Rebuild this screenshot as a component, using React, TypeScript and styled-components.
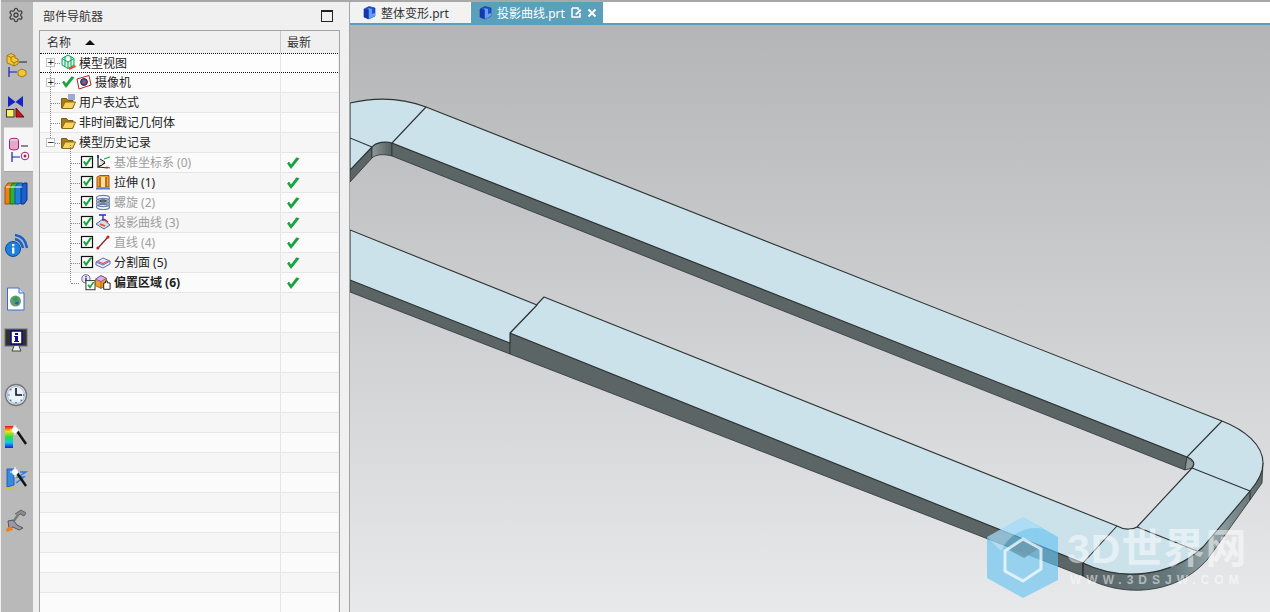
import React from 'react';
import styled, { createGlobalStyle } from 'styled-components';
import { Settings } from 'lucide-react';

const GlobalStyle = createGlobalStyle`
  html, body { margin: 0; padding: 0; height: 100%; overflow: hidden; }
  #root { height: 612px; }
`;

const Page = styled.div`
  display: flex;
  width: 1270px;
  height: 612px;
  overflow: hidden;
  background: #f0f0f0;
  font-family: "Noto Sans", "Noto Sans CJK SC", sans-serif;
  font-size: 12px;
  color: #222;
`;

const Rail = styled.div`
  width: 32px;
  flex: none;
  margin-left: 1px;
  background: #b9b9b9;
  border-top: 2px solid #a8a8a8;
  box-sizing: border-box;
  display: flex;
  flex-direction: column;
`;

const RailItem = styled.div<{ $h: number; $active?: boolean }>`
  height: ${p => p.$h}px;
  flex: none;
  display: flex;
  align-items: center;
  justify-content: center;
  padding-right: 2px;
  box-sizing: border-box;
  ${p => p.$active && `
    margin-left: 3px;
    padding-right: 0;
    background: #f6f6f6;
    border-top: 1px solid #d8d8d8;
    border-bottom: 1px solid #a8a8a8;
  `}
`;

const Navigator = styled.div`
  width: 317px;
  flex: none;
  display: flex;
  flex-direction: column;
  box-sizing: border-box;
  padding: 0 9px 0 6px;
  border-top: 2px solid #a8a8a8;
  border-right: 1px solid #a4a4a4;
`;

const NavTitle = styled.div`
  height: 28px;
  flex: none;
  display: flex;
  align-items: center;
  justify-content: space-between;
  padding: 0 7px 0 4px;
  color: #333;
`;

const MaxButton = styled.span`
  width: 10px;
  height: 9px;
  border: 1px solid #222;
  border-top-width: 2px;
`;

const TreeBox = styled.div`
  flex: 1;
  width: 301px;
  box-sizing: border-box;
  border: 1px solid #a5a5a5;
  border-bottom: none;
  overflow: hidden;
`;

const HeaderRow = styled.div`
  display: flex;
  height: 22px;
  background: #f0f0f0;
  color: #333;
`;

const HeaderName = styled.div`
  width: 241px;
  box-sizing: border-box;
  display: flex;
  align-items: center;
  gap: 14px;
  padding-left: 7px;
  border-right: 1px solid #c9c9c9;
`;

const SortArrow = styled.span`
  width: 0;
  height: 0;
  border-left: 5px solid transparent;
  border-right: 5px solid transparent;
  border-bottom: 5px solid #111;
`;

const HeaderNew = styled.div`
  flex: 1;
  display: flex;
  align-items: center;
  padding-left: 6px;
`;

const Row = styled.div<{ $odd: boolean; $selected?: boolean }>`
  display: flex;
  height: 20px;
  box-sizing: border-box;
  width: 298px;
  border-bottom: 1px solid #e6e6e6;
  background: ${p => (p.$odd ? '#f6f6f6' : '#fbfbfb')};
  ${p => p.$selected && `
    background: #fdfdfd;
    border-top: 1px dotted #111;
    border-bottom: 1px dotted #111;
  `}
`;

const NameCell = styled.div`
  position: relative;
  width: 241px;
  box-sizing: border-box;
  display: flex;
  align-items: center;
  border-right: 1px solid #e6e6e6;
`;

const NewCell = styled.div`
  flex: 1;
  display: flex;
  align-items: center;
  padding-left: 5px;
`;

const Gutter = styled.div<{ $w: number }>`
  width: ${p => p.$w}px;
  height: 100%;
  flex: none;
  position: relative;
  display: flex;
  align-items: center;
`;

/* dotted tree lines sit over the row background */
const VLine = styled.span<{ $x: number; $from: number; $to: number }>`
  position: absolute;
  left: ${p => p.$x}px;
  top: ${p => p.$from}px;
  bottom: ${p => p.$to}px;
  border-left: 1px dotted #888;
`;

const HLine = styled.span<{ $x: number; $w: number }>`
  position: absolute;
  left: ${p => p.$x}px;
  top: 50%;
  width: ${p => p.$w}px;
  border-top: 1px dotted #888;
`;

const Expander = styled.span`
  position: absolute;
  left: 6px;
  top: calc(50% - 5px);
  width: 7px;
  height: 7px;
  border: 1px solid #c4c4c4;
  background: #fff;
  color: #000;
  font: 9px/7px "DejaVu Sans", sans-serif;
  text-align: center;
  z-index: 1;
`;

const IconSlot = styled.span<{ $w: number }>`
  width: ${p => p.$w}px;
  height: 16px;
  flex: none;
  display: flex;
  align-items: center;
  justify-content: center;
  margin-top: -2px;
`;

const Label = styled.span<{ $dim?: boolean; $bold?: boolean }>`
  margin-left: 3px;
  line-height: 15px;
  white-space: nowrap;
  color: ${p => (p.$dim ? '#9e9e9e' : '#222')};
  font-weight: ${p => (p.$bold ? 700 : 400)};
`;

const Main = styled.div`
  flex: 1;
  display: flex;
  flex-direction: column;
  min-width: 0;
`;

const TabBar = styled.div`
  height: 25px;
  flex: none;
  box-sizing: border-box;
  display: flex;
  background: #fff;
  border-top: 2px solid #a8a8a8;
  border-bottom: 2px solid #5aa0bb;
`;

const Tab = styled.div<{ $active?: boolean; $w: number }>`
  width: ${p => p.$w}px;
  box-sizing: border-box;
  display: flex;
  align-items: center;
  gap: 4px;
  padding-left: ${p => (p.$active ? 7 : 12)}px;
  margin-left: ${p => (p.$active ? 1 : 0)}px;
  background: ${p => (p.$active ? '#5aa0bb' : '#f2f2f2')};
  color: ${p => (p.$active ? '#fff' : '#333')};
`;

const TabTools = styled.span`
  display: flex;
  align-items: center;
  gap: 5px;
  margin-left: 2px;
`;

const Viewport = styled.div`
  position: relative;
  flex: 1;
  min-height: 0;
  background: linear-gradient(#b4b5b7, #e8e9eb);
`;

const Scene = styled.svg`
  display: block;
  width: 100%;
  height: 100%;
`;

const Watermark = styled.div`
  position: absolute;
  left: 637px;
  top: 492px;
  display: flex;
  gap: 8px;
  pointer-events: none;
`;

const WatermarkText = styled.div`
  display: flex;
  flex-direction: column;
  color: rgba(255, 255, 255, 0.5);
  padding-top: 9px;
`;

const WatermarkTitle = styled.div`
  font: 700 41px/46px "Liberation Sans", "Noto Sans CJK SC", sans-serif;
  letter-spacing: 1px;
  white-space: nowrap;
`;

const WatermarkUrl = styled.div`
  font: 700 12px/14px "Liberation Sans", sans-serif;
  letter-spacing: 5px;
  margin: 1px 0 0 3px;
  white-space: nowrap;
`;

const Svg = ({ s = 16, w, h, children }: { s?: number; w?: number; h?: number; children: React.ReactNode }) => (
  <svg width={w ?? s} height={h ?? s} viewBox={`0 0 ${w ?? s} ${h ?? s}`}>{children}</svg>
);

const GreenCheck = () => (
  <Svg s={14}>
    <path d="M1.5 7.5 L5 12.5 L13 2.5 L10.5 1.8 L5 9 L3 6 Z" fill="#12a83a" stroke="#0c8a2e" strokeWidth="0.6" />
  </Svg>
);

const CheckBox = () => (
  <svg width="14" height="14" viewBox="0 0 14 14">
    <rect x="1.5" y="1.5" width="11" height="11" fill="#fff" stroke="#111" strokeWidth="1.2" />
    <path d="M3 7 L6 11.5 L12.5 2.5 L10 2.5 L6 8 L4.5 5.8 Z" fill="#12a83a" />
  </svg>
);

const Folder = () => (
  <Svg>
    <path d="M1.5 4.5 h5 l1.5 2 h5 v7.5 h-11.5 z" fill="#a87a1c" stroke="#7a5a14" />
    <path d="M2 14.5 L5 8 h10.5 L12.5 14.5 z" fill="#fbd35c" stroke="#8a6a1c" />
  </Svg>
);

const FormulaFolder = () => (
  <Svg>
    <path d="M1.5 4.5 h5 l1.5 2 h5 v7.5 h-11.5 z" fill="#a87a1c" stroke="#7a5a14" />
    <path d="M2 14.5 L5 8 h10.5 L12.5 14.5 z" fill="#fbd35c" stroke="#8a6a1c" />
    <path d="M8 1 h7 M8 3 h7 M8 5 h7" stroke="#2030b0" strokeWidth="0.8" />
  </Svg>
);

const CubeGreen = () => (
  <Svg>
    <path d="M8 1 L14 4.5 V11 L8 14.5 L2 11 V4.5 Z M2 4.5 L8 8 L14 4.5 M8 8 V14.5 M5 2.8 V12.8 M11 2.8 V12.8" fill="#d8f4e4" stroke="#12a060" strokeWidth="1" />
    <path d="M9 15 L15.5 12" stroke="#e8502a" strokeWidth="2" />
  </Svg>
);

const Camera = () => (
  <Svg>
    <path d="M1 5 L13 1.5 L15 11 L3 15 Z" fill="#fff" stroke="#c02020" />
    <circle cx="8" cy="8" r="3.4" fill="#5a5aa8" stroke="#222" />
    <circle cx="8" cy="8" r="1.2" fill="#e04040" />
  </Svg>
);

const DatumIcon = () => (
  <Svg>
    <path d="M3 1 V13 L10 9 M3 13 L13 14" stroke="#222" strokeWidth="1.2" fill="none" />
    <path d="M5 5 L10 8 L6 12" stroke="#222" fill="#d8d8c8" />
    <path d="M9 5 L15 3" stroke="#12a83a" strokeWidth="1.2" />
    <path d="M3 1 L3 4" stroke="#2030c0" strokeWidth="1.6" />
    <path d="M11 13 L15 14" stroke="#d02020" strokeWidth="1.2" />
  </Svg>
);

const ExtrudeIcon = () => (
  <Svg>
    <path d="M2 3 L5 1.5 H14 V13 H2 Z" fill="#f0a030" stroke="#b05010" />
    <path d="M5 3 v10 M11 3 v10" stroke="#904010" />
    <path d="M6 3 h4 v10 h-4 z" fill="#fbe0a0" />
    <path d="M1 14.5 h14" stroke="#5a80c8" strokeWidth="2" />
  </Svg>
);

const HelixIcon = () => (
  <Svg>
    {[4, 7, 10, 13].map(y => (
      <ellipse key={y} cx="8" cy={y} rx="6.5" ry="2.6" fill="none" stroke="#6a84a8" strokeWidth="1.3" />
    ))}
    <ellipse cx="8" cy="7" rx="3" ry="1.2" fill="none" stroke="#444" />
  </Svg>
);

const ProjectIcon = () => (
  <Svg>
    <path d="M1 10 L8 5 L15 11 L9 15 Z" fill="#d8dce8" stroke="#5068a0" />
    <path d="M5 10 L10 12" stroke="#e05020" strokeWidth="1.6" />
    <path d="M4 1 h7 M8 1 V7" stroke="#2030c0" strokeWidth="1.3" />
    <path d="M9 5 L13 8" stroke="#d02020" strokeWidth="1.3" />
  </Svg>
);

const LineIcon = () => (
  <Svg>
    <path d="M3 14 L13 3" stroke="#7a2020" strokeWidth="1.2" />
    <circle cx="2.8" cy="14" r="1.5" fill="#e01818" />
    <circle cx="13" cy="3" r="1.5" fill="#e01818" />
  </Svg>
);

const SplitIcon = () => (
  <Svg>
    <path d="M1 8 L8 4 L15 7 V10 L8 14 L1 11 Z" fill="#e8e8f4" stroke="#6070b8" />
    <path d="M1 8 L8 11 L15 7" fill="none" stroke="#6070b8" />
    <path d="M3 7.5 L8 9.5 L13 7" stroke="#e05050" strokeWidth="1.2" fill="none" />
  </Svg>
);

const OffsetIcon = () => (
  <svg width="34" height="18" viewBox="0 0 34 18">
    <circle cx="6.5" cy="5.5" r="4.5" fill="#e8e8f4" stroke="#606078" />
    <rect x="5.8" y="2.5" width="1.5" height="1.3" fill="#1830a0" />
    <rect x="5.8" y="4.5" width="1.5" height="4" fill="#1830a0" />
    <rect x="6.5" y="7.5" width="10" height="10" fill="#fff" stroke="#222" />
    <path d="M8 12.5 L11 16.5 L16 9 L14 9 L11 13 L9.5 11.5 Z" fill="#12a83a" />
    <path d="M17 6 L23 2 L29 5 V12 L23 16 L17 13 Z" fill="#f0a030" stroke="#a06010" />
    <path d="M17 6 L23 2 L29 5 L23 8.5 Z" fill="#d8b0e8" stroke="#8050a0" />
    <path d="M23 8.5 V16" stroke="#a06010" />
    <path d="M26 10 h2 v-2 h2 v2 h3 v7 h-7 z" fill="#fff" stroke="#111" />
  </svg>
);

const PartCube = () => (
  <Svg s={15}>
    <path d="M2 4 L7 1.5 L13 3 V11 L7 14 L2 12 Z" fill="#1c50d8" stroke="#10308a" strokeWidth="0.6" />
    <path d="M6 3 L10 4 V9 L13 8 V11 L7 14 V5 Z" fill="#6a9cf0" />
    <path d="M2 4 L6 5 V14 L2 12 Z" fill="#1438a8" />
  </Svg>
);

const Assembly = () => (
  <Svg w={24} h={26}>
    <path d="M3 8 V2.5 L7 0.5 L11 2.5 V5 L14 6 V11 L10 13 L7 11.5 L3 10 Z" fill="#f4c832" stroke="#a07a14" />
    <path d="M3 2.5 L7 4.5 L11 2.5 M7 4.5 V8 M7 8 L10 10 L14 8 M10 10 V13" fill="none" stroke="#a07a14" />
    <path d="M5 14 V24 M5 19 H13" stroke="#1220b8" strokeWidth="1.2" fill="none" />
    <path d="M15 9 H23" stroke="#222" strokeWidth="1" />
    <path d="M14 18 L18 16 L22 18 V22 L18 24 L14 22 Z" fill="#f4c832" stroke="#a07a14" />
  </Svg>
);

const Constraints = () => (
  <Svg w={22} h={24}>
    <path d="M3 1 L10.5 7 L3 12 Z M18 1 L10.5 7 L18 12 Z" fill="#1424c8" />
    <rect x="1.5" y="14.5" width="7.5" height="7.5" fill="#fff060" stroke="#333" />
    <path d="M11 13 L19 22 H11 Z" fill="#c81414" stroke="#601010" />
  </Svg>
);

const PartNav = () => (
  <Svg w={24} h={26}>
    <ellipse cx="7" cy="3.5" rx="4.5" ry="2.2" fill="#f0d0e4" stroke="#a02070" />
    <path d="M2.5 3.5 V11 C2.5 13.5 11.5 13.5 11.5 11 V3.5" fill="#e8a8cc" stroke="#a02070" />
    <path d="M5 15 V25 M5 20 H13" stroke="#1220b8" strokeWidth="1.2" fill="none" />
    <path d="M14 9 H21" stroke="#222" />
    <circle cx="18" cy="19" r="3.8" fill="#fff" stroke="#a02070" />
    <circle cx="18" cy="19" r="1.5" fill="#a02070" />
  </Svg>
);

const Books = () => (
  <Svg w={24} h={24}>
    <path d="M1 6 L4 2 H9 V21 L5 23 H1 Z" fill="#f08010" stroke="#a05008" />
    <path d="M6 6 L9 2 H14 V21 L10 23 H6 Z" fill="#30b030" stroke="#107010" />
    <path d="M11 6 L14 2 H19 V21 L15 23 H11 Z" fill="#2080e0" stroke="#1050a0" />
    <path d="M17 6 L20 2 H23 V19 L20 23 H17 Z" fill="#1860d0" stroke="#103080" />
    <path d="M2 6 H7 M7 6 H12 M12 6 H18" stroke="#fff" strokeWidth="1" />
  </Svg>
);

const InfoFeed = () => (
  <Svg w={26} h={26}>
    <path d="M12 2 C19 3 23 8 24 15" fill="none" stroke="#1c60c8" strokeWidth="2.4" />
    <path d="M12 6 C16 7 19 10 20 15" fill="none" stroke="#1c60c8" strokeWidth="2.4" />
    <circle cx="10" cy="16" r="7.5" fill="#1c80e0" stroke="#104ea0" />
    <rect x="9" y="11" width="2.4" height="2.2" fill="#fff" />
    <rect x="9" y="14.5" width="2.4" height="6" fill="#fff" />
  </Svg>
);

const DocGlobe = () => (
  <Svg w={20} h={24}>
    <path d="M1.5 1 H13 L18 6 V23 H1.5 Z" fill="#fff" stroke="#3870c8" />
    <path d="M13 1 V6 H18" fill="#d8e8f8" stroke="#3870c8" />
    <circle cx="9.5" cy="14" r="5.5" fill="#6a9a78" />
    <path d="M6 12 L10 9 L13 13 L9 15 Z" fill="#30a050" />
    <path d="M8 16 L13 14 L12 18 Z" fill="#2060b0" />
  </Svg>
);

const MonitorInfo = () => (
  <Svg w={24} h={26}>
    <rect x="1" y="1" width="22" height="17" fill="#303030" stroke="#707070" />
    <rect x="7" y="3" width="11" height="13" fill="#fff" stroke="#101080" strokeWidth="1.6" />
    <rect x="11" y="5" width="3" height="2" fill="#101080" />
    <path d="M10 8 H14 V13 H15 V14 H10 V13 H11 V9 H10 Z" fill="#101080" />
    <path d="M10 18 L8 23 H17 L15 18" fill="#eee" stroke="#444" />
  </Svg>
);

const ClockIcon = () => (
  <Svg w={24} h={24}>
    <circle cx="12" cy="12" r="10.5" fill="#dfe8f4" stroke="#777" strokeWidth="1.4" />
    <circle cx="12" cy="12" r="8.5" fill="#eaf2fb" stroke="#a8b8cc" />
    <path d="M12 5 V12 H18" stroke="#111" strokeWidth="1.6" fill="none" />
    {[[12, 19.5], [5, 12], [19.5, 12], [6.8, 6.8], [17.2, 17.2], [6.8, 17.2]].map(([x, y]) => (
      <circle key={`${x}-${y}`} cx={x} cy={y} r="0.7" fill="#2a4a80" />
    ))}
  </Svg>
);

const Wand = () => (
  <>
    <path d="M13 6 L22 19" stroke="#111" strokeWidth="2.4" />
    <circle cx="11" cy="5" r="3" fill="#fff" />
    <path d="M11 0 V10 M6 5 H16" stroke="#fff" strokeWidth="1" />
  </>
);

const PaletteWand = () => (
  <Svg w={24} h={24}>
    <defs>
      <linearGradient id="rainbow" x1="0" y1="0" x2="0" y2="1">
        <stop offset="0" stopColor="#e81010" />
        <stop offset="0.25" stopColor="#f0e010" />
        <stop offset="0.5" stopColor="#20e040" />
        <stop offset="0.75" stopColor="#10c8e8" />
        <stop offset="1" stopColor="#1020e0" />
      </linearGradient>
    </defs>
    <rect x="1" y="1" width="8" height="22" fill="url(#rainbow)" />
    <Wand />
  </Svg>
);

const SheetWand = () => (
  <Svg w={24} h={24}>
    <path d="M3 2 H10 V18 L3 20 Z" fill="#3a8ae0" stroke="#1c60c0" />
    <path d="M10 5 H22 L14 10 H20 L12 16" fill="none" stroke="#2a78d8" strokeWidth="1.4" />
    <path d="M1 21 H10" stroke="#e0c020" strokeWidth="1.6" />
    <Wand />
  </Svg>
);

const ToolsIcon = () => (
  <Svg w={24} h={24}>
    <path d="M11 5 L17 1 L22 4 L20 7 L16 5 L14 7" fill="#8a8a8a" stroke="#666" />
    <path d="M14 6 L9 13" stroke="#777" strokeWidth="2.2" />
    <path d="M4 12 L9 11 L13 16 L19 19 L15 21 L9 18 L5 19 Z" fill="#9898b0" stroke="#555" />
    <path d="M2 20 L7 17 L9 21 L3 23 Z" fill="#f08018" />
  </Svg>
);

const EditDoc = () => (
  <Svg s={11}>
    <path d="M1 1 H7 V3 M9 6 V10 H1 V1" fill="none" stroke="#fff" strokeWidth="1.5" />
    <path d="M4 7 L9 2 L10.5 3.5 L5.5 8 Z" fill="#fff" />
  </Svg>
);

const CloseX = () => (
  <Svg s={10}>
    <path d="M1.5 1.5 L8.5 8.5 M8.5 1.5 L1.5 8.5" stroke="#fff" strokeWidth="2" />
  </Svg>
);

const railItems: { h: number; active?: boolean; icon: React.ReactNode }[] = [
  { h: 26, icon: <Settings size={16} color="#444" strokeWidth={2} /> },
  { h: 17, icon: null },
  { h: 42, icon: <Assembly /> },
  { h: 40, icon: <Constraints /> },
  { h: 45, active: true, icon: <PartNav /> },
  { h: 42, icon: <Books /> },
  { h: 64, icon: <InfoFeed /> },
  { h: 42, icon: <DocGlobe /> },
  { h: 42, icon: <MonitorInfo /> },
  { h: 12, icon: null },
  { h: 42, icon: <ClockIcon /> },
  { h: 42, icon: <PaletteWand /> },
  { h: 42, icon: <SheetWand /> },
  { h: 42, icon: <ToolsIcon /> },
];

type TreeRow = {
  label?: string;
  depth?: number;
  expander?: string;
  check?: boolean;
  icon?: React.ReactNode;
  dim?: boolean;
  bold?: boolean;
  latest?: boolean;
  selected?: boolean;
};

const rows: TreeRow[] = [
  { label: '模型视图', expander: '+', icon: <CubeGreen />, selected: true },
  { label: '摄像机', expander: '+', check: true, icon: <Camera /> },
  { label: '用户表达式', icon: <FormulaFolder /> },
  { label: '非时间戳记几何体', icon: <Folder /> },
  { label: '模型历史记录', expander: '−', icon: <Folder /> },
  { label: '基准坐标系 (0)', depth: 1, icon: <DatumIcon />, dim: true, latest: true },
  { label: '拉伸 (1)', depth: 1, icon: <ExtrudeIcon />, latest: true },
  { label: '螺旋 (2)', depth: 1, icon: <HelixIcon />, dim: true, latest: true },
  { label: '投影曲线 (3)', depth: 1, icon: <ProjectIcon />, dim: true, latest: true },
  { label: '直线 (4)', depth: 1, icon: <LineIcon />, dim: true, latest: true },
  { label: '分割面 (5)', depth: 1, icon: <SplitIcon />, latest: true },
  { label: '偏置区域 (6)', depth: 2, bold: true, latest: true },
];

const totalRows = 28;

function TreeLines({ index, row }: { index: number; row: TreeRow }) {
  const outer = index <= 4;
  const inner = index >= 4 && index <= 11;
  return (
    <>
      {outer && <VLine $x={10} $from={index === 0 ? 9 : 0} $to={index === 4 ? 10 : 0} />}
      {outer && <HLine $x={11} $w={9} />}
      {inner && <VLine $x={30} $from={index === 4 ? 12 : 0} $to={index === 11 ? 10 : 0} />}
      {row.depth && <HLine $x={31} $w={row.depth === 2 ? 8 : 9} />}
    </>
  );
}

const Scene3D = () => (
  <Scene viewBox="350 25 920 587">
    <defs>
      <linearGradient id="wallEnd" x1="1083" y1="0" x2="1262" y2="0" gradientUnits="userSpaceOnUse">
        <stop offset="0" stopColor="#5a6466" />
        <stop offset="0.5" stopColor="#66787c" />
        <stop offset="0.72" stopColor="#93a6aa" />
        <stop offset="1" stopColor="#5c686a" />
      </linearGradient>
      <linearGradient id="wallCorner" x1="372" y1="0" x2="392" y2="0" gradientUnits="userSpaceOnUse">
        <stop offset="0" stopColor="#8d999b" />
        <stop offset="1" stopColor="#545d5e" />
      </linearGradient>
    </defs>
    {/* walls */}
    <path d="M350 170 L372 147 L372 158 L350 182 Z" fill="#5c6566" stroke="#2e3234" strokeWidth="0.8" />
    <path d="M372 147 C376 142 386 141 392 143 L392 156 C384 154 376 154 372 158 Z" fill="url(#wallCorner)" stroke="#2e3234" strokeWidth="0.8" />
    <path d="M392 143 L1187 457 L1185 470 L392 156 Z" fill="#5c6566" stroke="#2e3234" strokeWidth="0.8" />
    <path d="M1187 457 L1194 463 L1192 468 L1185 470 Z" fill="#8d999b" stroke="#2e3234" strokeWidth="0.8" />
    <path d="M350 280 L510 343 L510 354 L350 292 Z" fill="#5c6566" stroke="#2e3234" strokeWidth="0.8" />
    <path d="M510 333 L1083 563 L1083 576 L970 532 L510 354 Z" fill="#5c6566" stroke="#2e3234" strokeWidth="0.8" />
    <path d="M1083 563 C1120 581 1170 578 1203 547 L1250 491 L1263 463 L1262 483 L1250 500 L1207 560 C1175 596 1120 598 1083 576 Z" fill="url(#wallEnd)" stroke="#2e3234" strokeWidth="0.8" />
    {/* top faces */}
    <g fill="#cbe2ea" stroke="#2e3234" strokeWidth="1.1" strokeLinejoin="round">
      <path d="M350 103 C376 97 402 98 426 107 L1222 421 C1245 430 1263 445 1263 463 C1263 473 1257 483 1250 491 L1203 547 C1170 578 1120 581 1083 563 L510 333 L544 297 L1117 526 C1124 530 1132 530 1137 527 L1192 468 C1196 464 1193 459 1187 457 L392 143 C386 141 376 142 372 147 L350 170 Z" />
      <path d="M350 230 L537 305 L510 333 L510 343 L350 280 Z" />
      <path d="M350 138 L372 147 M392 143 L426 107 M1187 457 L1222 421 M1192 468 L1250 491 M1137 527 L1197 551 M1117 526 L1083 563 M1250 491 V500 M1083 563 V576" fill="none" />
    </g>
  </Scene>
);

export default function App() {
  return (
    <Page>
      <GlobalStyle />
      <Rail>
        {railItems.map((item, i) => (
          <RailItem key={i} $h={item.h} $active={item.active}>{item.icon}</RailItem>
        ))}
      </Rail>
      <Navigator>
        <NavTitle>
          <span>部件导航器</span>
          <MaxButton />
        </NavTitle>
        <TreeBox>
          <HeaderRow>
            <HeaderName>名称<SortArrow /></HeaderName>
            <HeaderNew>最新</HeaderNew>
          </HeaderRow>
          {Array.from({ length: totalRows }, (_, i) => {
            const row: TreeRow = rows[i] ?? {};
            return (
              <Row key={i} $odd={i % 2 === 0} $selected={row.selected}>
                <NameCell>
                  {row.label && (
                    <Gutter $w={row.depth ? 40 : 20}>
                      <TreeLines index={i} row={row} />
                      {row.expander && <Expander>{row.expander}</Expander>}
                    </Gutter>
                  )}
                  {row.depth === 1 && <IconSlot $w={14}><CheckBox /></IconSlot>}
                  {row.check && <IconSlot $w={16}><GreenCheck /></IconSlot>}
                  {row.icon && <IconSlot $w={row.depth ? 17 : 16}>{row.icon}</IconSlot>}
                  {row.depth === 2 && <IconSlot $w={31}><OffsetIcon /></IconSlot>}
                  {row.label && <Label $dim={row.dim} $bold={row.bold}>{row.label}</Label>}
                </NameCell>
                <NewCell>{row.latest && <GreenCheck />}</NewCell>
              </Row>
            );
          })}
        </TreeBox>
      </Navigator>
      <Main>
        <TabBar>
          <Tab $w={120}><PartCube /><span>整体变形.prt</span></Tab>
          <Tab $w={132} $active>
            <PartCube />
            <span>投影曲线.prt</span>
            <TabTools><EditDoc /><CloseX /></TabTools>
          </Tab>
        </TabBar>
        <Viewport>
          <Scene3D />
          <Watermark>
            <svg width="72" height="82" viewBox="0 0 72 82">
              <path d="M36 0 L71 20 V63 L36 81 L0 61 V20 Z" fill="#62c2f2" fillOpacity="0.62" />
              <path d="M36 0 L56 12 C42 8 22 16 14 34 L0 20 Z" fill="#fff" fillOpacity="0.3" />
              <path d="M18 34 L36 22 L54 32 V52 L36 64 L18 54 Z" fill="#9ad4ee" fillOpacity="0.35" stroke="#fff" strokeOpacity="0.7" strokeWidth="3" />
              <path d="M22 33 L36 24 L51 32 L37 41 Z" fill="#6a9cb0" fillOpacity="0.9" />
            </svg>
            <WatermarkText>
              <WatermarkTitle>3D世界网</WatermarkTitle>
              <WatermarkUrl>WWW.3DSJW.COM</WatermarkUrl>
            </WatermarkText>
          </Watermark>
        </Viewport>
      </Main>
    </Page>
  );
}
